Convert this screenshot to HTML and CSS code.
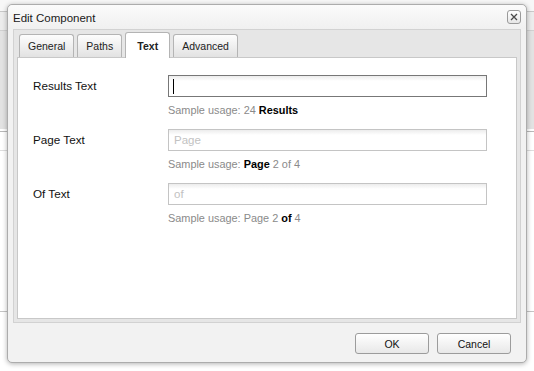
FILE: index.html
```html
<!doctype html>
<html lang="en">
	<head>
		<meta charset="utf-8" />
		<title>Edit Component</title>
		<link rel="stylesheet" href="styles.css">
	</head>
	<body>
		<div class="xx-dialog">
			<div class="xx-dialog-header">
				<span class="xx-dialog-title">Edit Component</span>
				<button class="xx-dialog-close" type="button" aria-label="Close">
					<svg width="8" height="8" viewBox="0 0 8 8">
						<path d="M1 1 L7 7 M7 1 L1 7" stroke="#4a4a4a" stroke-width="1.3" fill="none" />
					</svg>
				</button>
			</div>
			<div class="xx-tabpanel">
				<div class="xx-tabs">
					<div class="xx-tab">General</div>
					<div class="xx-tab">Paths</div>
					<div class="xx-tab xx-tab-active">Text</div>
					<div class="xx-tab">Advanced</div>
				</div>
				<div class="xx-tab-body">
					<div class="xx-form">
						<label class="xx-label" for="results">Results Text</label>
						<div class="xx-field">
							<input class="xx-input xx-input-focus" id="results" type="text" />
							<span class="xx-caret"></span>
						</div>
						<div class="xx-hint">Sample usage: 24 <b>Results</b></div>

						<label class="xx-label" for="page">Page Text</label>
						<div class="xx-field">
							<input class="xx-input" id="page" type="text" placeholder="Page" />
						</div>
						<div class="xx-hint">Sample usage: <b>Page</b> 2 of 4</div>

						<label class="xx-label" for="of">Of Text</label>
						<div class="xx-field">
							<input class="xx-input" id="of" type="text" placeholder="of" />
						</div>
						<div class="xx-hint">Sample usage: Page 2 <b>of</b> 4</div>
					</div>
				</div>
			</div>
			<div class="xx-dialog-footer">
				<button class="xx-button" type="button">OK</button>
				<button class="xx-button" type="button">Cancel</button>
			</div>
		</div>
	</body>
</html>
```

FILE: styles.css
```css
/* Page behind the dialog */
body {
	margin: 0;
	height: 371px;
	overflow: hidden;
	font-family: "Liberation Sans", Arial, sans-serif;
	color: #111;
	background:
		linear-gradient(to bottom,
			#f7f7f7 0, #f7f7f7 11px,
			#c8c8c8 11px, #c8c8c8 12px,
			#ececec 12px, #ececec 30px,
			#d0d0d0 30px, #d0d0d0 31px,
			#e2e2e2 31px, #e2e2e2 129px,
			#ffffff 129px, #ffffff 131px,
			#b8b8b8 131px, #b8b8b8 132px,
			#ffffff 132px, #ffffff 150px,
			#dddddd 150px, #dddddd 151px,
			#ffffff 151px, #ffffff 311px,
			#c4c4c4 311px, #c4c4c4 312px,
			#ffffff 312px);
}

/* Dialog */
.xx-dialog {
	box-sizing: border-box;
	display: flex;
	flex-direction: column;
	width: 520px;
	height: 359px;
	margin: 4px 0 0 7px;
	background-color: #f2f2f2;
	border: 1px solid #acacac;
	border-radius: 5px;
	box-shadow: 0 1px 5px rgba(0, 0, 0, 0.3);
}

.xx-dialog-header {
	display: flex;
	align-items: center;
	justify-content: space-between;
	height: 24px;
	padding: 0 5px;
	border-radius: 5px 5px 0 0;
	background: linear-gradient(to bottom, #fbfbfb, #f0f0f0);
}

.xx-dialog-title {
	font-size: 11.5px;
	color: #1a1a1a;
	padding-top: 1px;
}

.xx-dialog-close {
	display: flex;
	align-items: center;
	justify-content: center;
	box-sizing: border-box;
	width: 14px;
	height: 14px;
	padding: 0;
	margin-top: -1px;
	border: 1px solid #9a9a9a;
	border-radius: 3px;
	background: linear-gradient(to bottom, #ffffff, #e6e6e6);
}

/* Tab panel */
.xx-tabpanel {
	box-sizing: border-box;
	display: flex;
	flex-direction: column;
	width: 508px;
	height: 294px;
	margin-left: 5px;
	padding: 0 3px 3px;
	background-color: #e6e6e6;
	border: 1px solid #d2d2d2;
}

.xx-tabs {
	display: flex;
	align-items: flex-end;
	gap: 3px;
	height: 27px;
	padding-left: 2px;
}

.xx-tab {
	box-sizing: border-box;
	height: 23px;
	padding: 0 8px;
	font-size: 10.5px;
	line-height: 23px;
	text-align: center;
	color: #222;
	border: 1px solid #b4b4b4;
	border-bottom: none;
	border-radius: 3px 3px 0 0;
	background: linear-gradient(to bottom, #fdfdfd, #e2e2e2);
}

.xx-tab-active {
	position: relative;
	height: 26px;
	margin-bottom: -1px;
	min-width: 45px;
	line-height: 26px;
	font-weight: bold;
	background: #ffffff;
}

.xx-tab-body {
	flex: 1;
	background-color: #ffffff;
	border: 1px solid #c8c8c8;
	padding: 17px 0 0 15px;
}

/* Form */
.xx-form {
	display: grid;
	grid-template-columns: 135px 319px;
}

.xx-label {
	height: 22px;
	font-size: 11.7px;
	line-height: 22px;
	color: #111;
}

.xx-field {
	position: relative;
}

.xx-input {
	box-sizing: border-box;
	display: block;
	width: 319px;
	height: 22px;
	margin: 0;
	padding: 0 5px;
	font-family: "Liberation Sans", Arial, sans-serif;
	font-size: 11.5px;
	color: #111;
	border: 1px solid #c4c4c4;
	border-radius: 0;
	outline: none;
	background: linear-gradient(to bottom, #ececec 0, #ffffff 5px, #ffffff 100%);
}

.xx-input::placeholder {
	color: #c2c2c2;
}

.xx-input-focus {
	border-color: #777777;
}

.xx-caret {
	position: absolute;
	left: 5px;
	top: 4px;
	width: 1px;
	height: 15px;
	background-color: #000;
}

.xx-hint {
	grid-column: 2;
	margin: 5px 0 11px;
	font-size: 10.9px;
	line-height: 16px;
	color: #8a8a8a;
}

.xx-hint b {
	color: #000;
}

/* Footer */
.xx-dialog-footer {
	display: flex;
	justify-content: flex-end;
	gap: 8px;
	padding: 10px 15px 0 0;
}

.xx-button {
	box-sizing: border-box;
	width: 74px;
	height: 21px;
	padding: 0;
	font-family: "Liberation Sans", Arial, sans-serif;
	font-size: 10.5px;
	color: #111;
	border: 1px solid #9c9c9c;
	border-radius: 3px;
	background: linear-gradient(to bottom, #ffffff, #e8e8e8);
}
```
